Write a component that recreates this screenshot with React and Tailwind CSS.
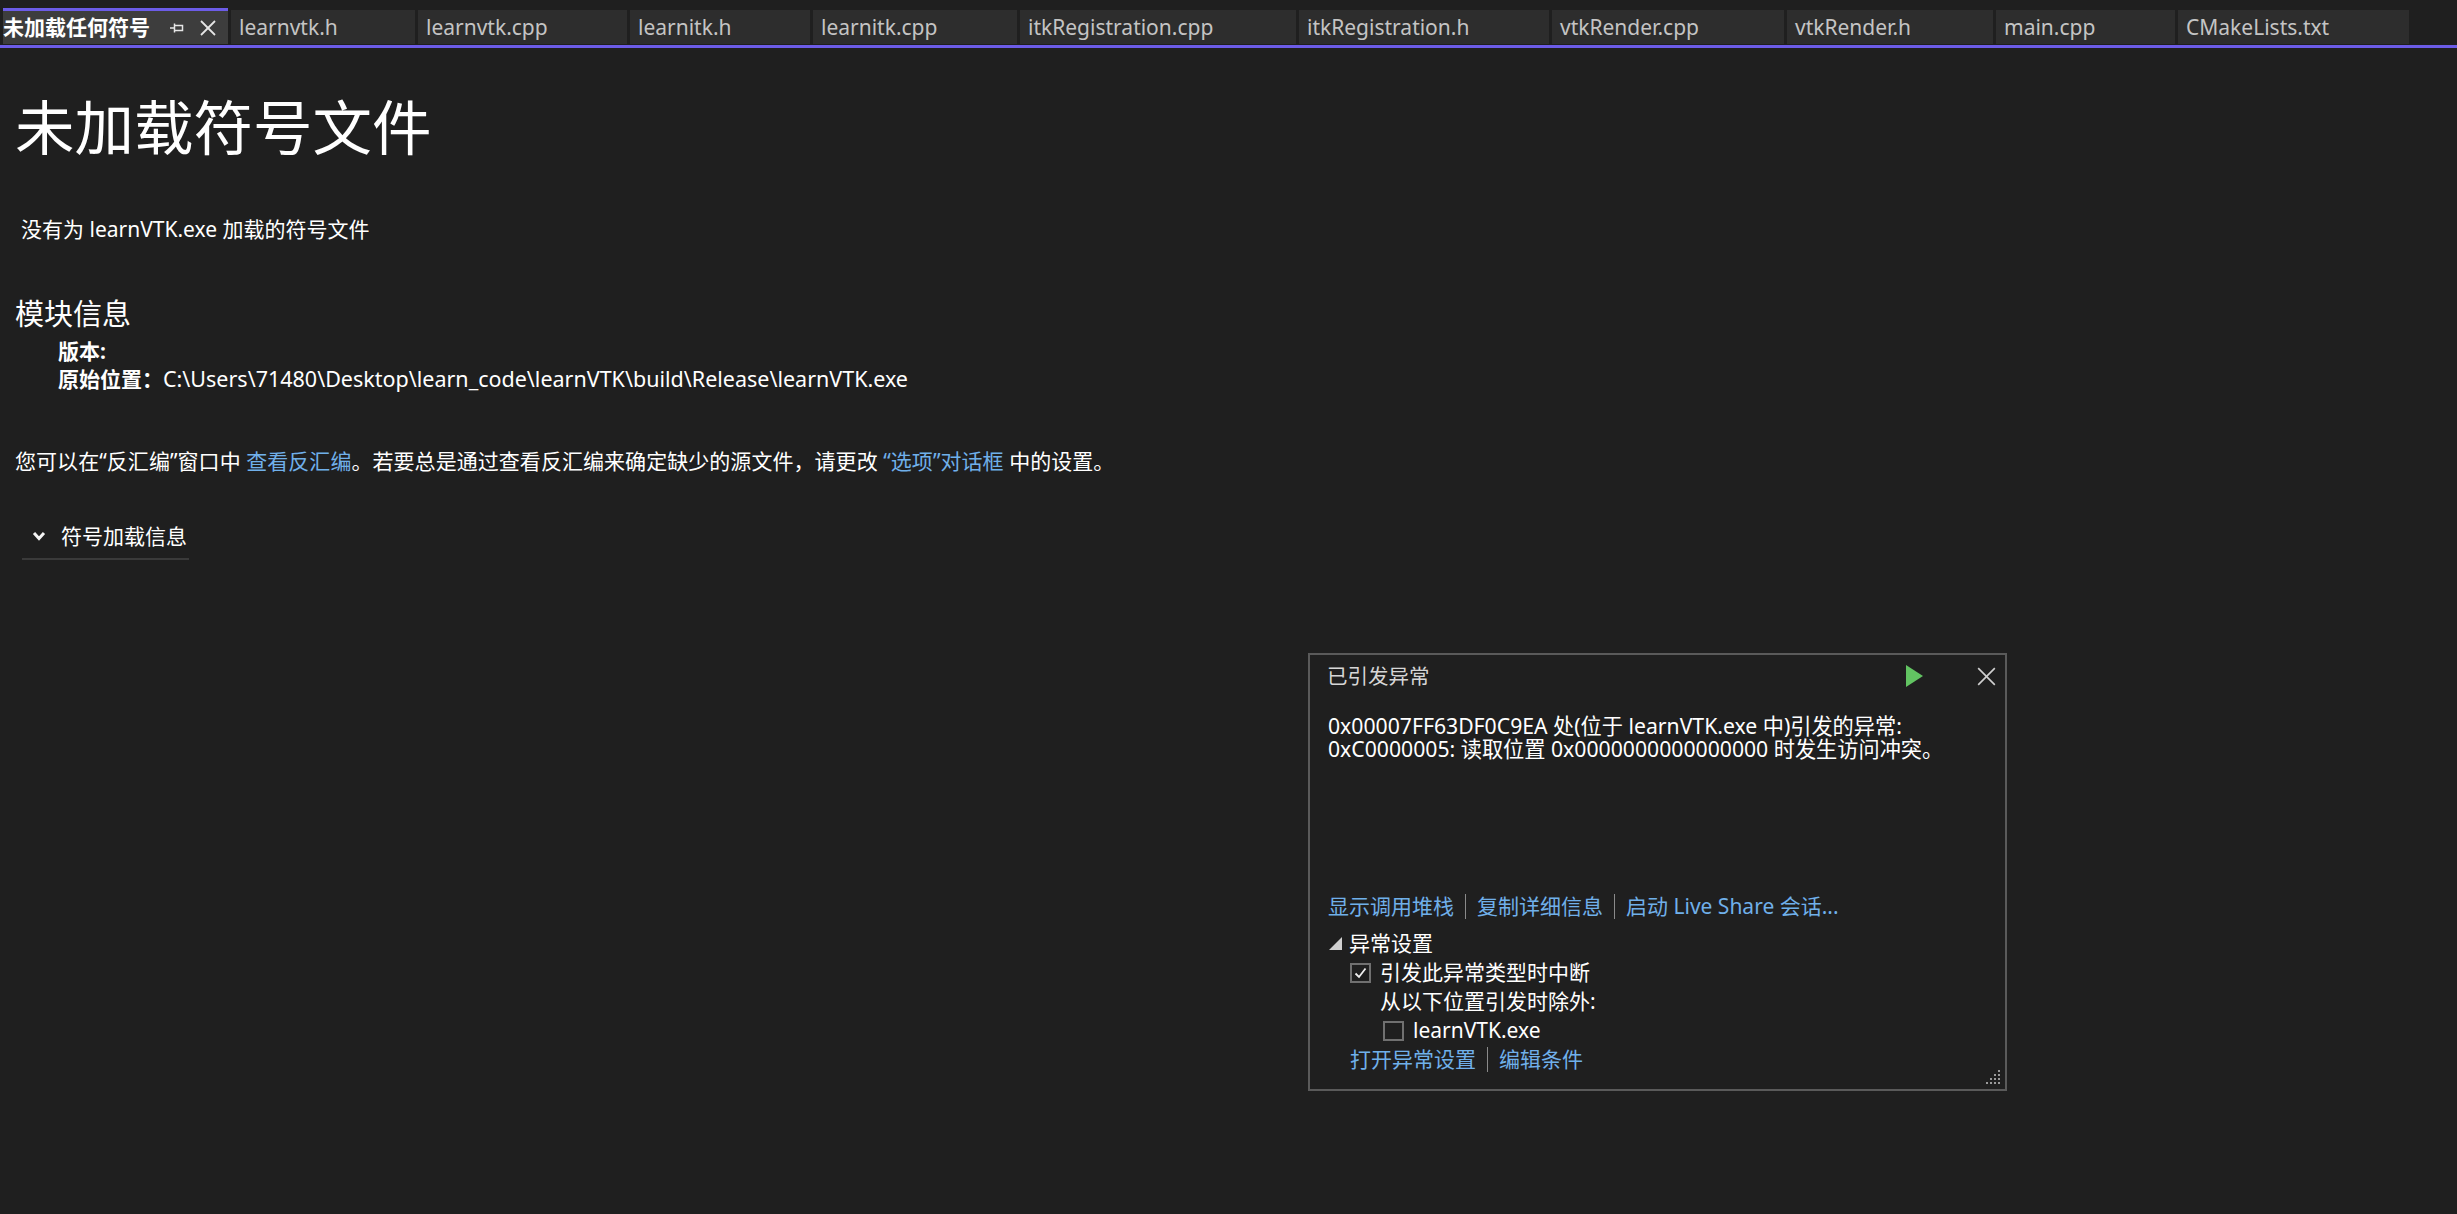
import React from 'react';

const tabs = [
  { name: 'learnvtk.h', w: 'w-[184px]' },
  { name: 'learnvtk.cpp', w: 'w-[209px]' },
  { name: 'learnitk.h', w: 'w-[180px]' },
  { name: 'learnitk.cpp', w: 'w-[204px]' },
  { name: 'itkRegistration.cpp', w: 'w-[276px]' },
  { name: 'itkRegistration.h', w: 'w-[250px]' },
  { name: 'vtkRender.cpp', w: 'w-[232px]' },
  { name: 'vtkRender.h', w: 'w-[206px]' },
  { name: 'main.cpp', w: 'w-[179px]' },
  { name: 'CMakeLists.txt', w: 'w-[231px]' },
];

function PinIcon() {
  return (
    <svg width="14" height="12" viewBox="0 0 14 12" fill="none" stroke="#e6e6e6" strokeWidth="1.5">
      <line x1="0" y1="6" x2="4" y2="6" />
      <line x1="4.5" y1="1.5" x2="4.5" y2="10.5" />
      <path d="M4.5 3.5 H12.5 V8.5 H4.5" />
    </svg>
  );
}

function CloseIcon({ size = 16, color = '#e6e6e6', width = 1.8 }) {
  return (
    <svg width={size} height={size} viewBox="0 0 16 16" fill="none" stroke={color} strokeWidth={width}>
      <line x1="1" y1="1" x2="15" y2="15" />
      <line x1="15" y1="1" x2="1" y2="15" />
    </svg>
  );
}

function TabBar() {
  return (
    <div>
      <div className="flex items-end h-[45px] pl-[3px] pb-[1px] gap-[3px]">
        <div className="flex items-center h-[36px] w-[225px] bg-[#3d3d3d] border-t-[3px] border-[#6c5ce7] shrink-0">
          <span className="text-[21px] font-bold text-white leading-none whitespace-nowrap">未加载任何符号</span>
          <span className="ml-[20px] flex items-center"><PinIcon /></span>
          <span className="ml-[16px] flex items-center"><CloseIcon size={16} /></span>
        </div>
        {tabs.map((t) => (
          <div key={t.name} className={`flex items-center h-[34px] bg-[#2d2d2d] pl-[8px] shrink-0 ${t.w}`}>
            <span className="text-[21px] text-[#c4c4c4] leading-none whitespace-nowrap">{t.name}</span>
          </div>
        ))}
      </div>
      <div className="h-[3px] bg-[#6c5ce7]" />
    </div>
  );
}

function Sep() {
  return <span className="inline-block w-px h-[25px] bg-[#8a8a8a] mx-[11px] align-middle" />;
}

function Checkbox({ checked }) {
  return (
    <span className="flex items-center justify-center w-[21px] h-[20px] border-2 border-[#707070] bg-[#1f1f1f] shrink-0">
      {checked && (
        <svg width="13" height="12" viewBox="0 0 13 12" fill="none" stroke="#f0f0f0" strokeWidth="1.8">
          <path d="M1.5 6.5 L5 10 L11.5 1.5" />
        </svg>
      )}
    </span>
  );
}

function ExceptionPopup() {
  return (
    <div className="absolute left-[1308px] top-[653px] w-[699px] h-[438px] border-2 border-[#5a5a5a] bg-[#1f1f1f] flex flex-col">
      <div className="flex items-center h-[42px] pl-[17px]">
        <span className="text-[20.5px] text-[#d6d6d6] leading-none">已引发异常</span>
        <svg className="ml-auto" width="17" height="22" viewBox="0 0 17 22">
          <polygon points="0,0 17,11 0,22" fill="#62c462" />
        </svg>
        <span className="ml-[54px] mr-[9px] flex items-center">
          <CloseIcon size={19} color="#d0d0d0" width={1.4} />
        </span>
      </div>
      <div className="mt-[17px] pl-[18px] text-[21.2px] leading-[23px] text-white">
        <div>0x00007FF63DF0C9EA 处(位于 learnVTK.exe 中)引发的异常:</div>
        <div>0xC0000005: 读取位置 0x0000000000000000 时发生访问冲突。</div>
      </div>
      <div className="mt-[132px] pl-[18px] h-[28px] flex items-center text-[21px] text-[#70b0ea] leading-none">
        <span>显示调用堆栈</span>
        <Sep />
        <span>复制详细信息</span>
        <Sep />
        <span>启动 Live Share 会话...</span>
      </div>
      <div className="mt-[9px] pl-[19px] text-[21px] text-white leading-none">
        <div className="h-[29px] flex items-center">
          <svg width="13" height="13" viewBox="0 0 13 13">
            <polygon points="13,0 13,13 0,13" fill="#d0d0d0" />
          </svg>
          <span className="ml-[7px]">异常设置</span>
        </div>
        <div className="h-[29px] flex items-center pl-[21px]">
          <Checkbox checked />
          <span className="ml-[9px]">引发此异常类型时中断</span>
        </div>
        <div className="h-[29px] flex items-center pl-[51px]">从以下位置引发时除外:</div>
        <div className="h-[29px] flex items-center pl-[54px]">
          <Checkbox />
          <span className="ml-[9px]">learnVTK.exe</span>
        </div>
        <div className="h-[29px] flex items-center pl-[21px] text-[#70b0ea]">
          <span>打开异常设置</span>
          <Sep />
          <span>编辑条件</span>
        </div>
      </div>
      <svg className="absolute right-[4px] bottom-[4px]" width="16" height="16" viewBox="0 0 16 16" fill="#9a9a9a">
        <rect x="13" y="1" width="2" height="2" />
        <rect x="9" y="5" width="2" height="2" />
        <rect x="13" y="5" width="2" height="2" />
        <rect x="5" y="9" width="2" height="2" />
        <rect x="9" y="9" width="2" height="2" />
        <rect x="13" y="9" width="2" height="2" />
        <rect x="1" y="13" width="2" height="2" />
        <rect x="5" y="13" width="2" height="2" />
        <rect x="9" y="13" width="2" height="2" />
        <rect x="13" y="13" width="2" height="2" />
      </svg>
    </div>
  );
}

export default function App() {
  return (
    <div className="relative w-[2457px] h-[1214px] overflow-hidden bg-[#1f1f1f] text-white font-['Noto_Sans','Noto_Sans_CJK_SC',sans-serif]">
      <TabBar />

      <div className="pl-[15px] pt-[49px]">
        <h1 className="text-[59.5px] leading-[59px] font-normal">未加载符号文件</h1>

        <p className="mt-[59px] ml-[6px] text-[21px] leading-[28px]">没有为 learnVTK.exe 加载的符号文件</p>

        <h2 className="mt-[54px] text-[29px] leading-[34px]">模块信息</h2>
        <div className="mt-[6px] ml-[43px] text-[21px] leading-[28px]">
          <div className="font-bold">版本:</div>
          <div><span className="font-bold">原始位置：</span><span className="text-[21.5px]">C:\Users\71480\Desktop\learn_code\learnVTK\build\Release\learnVTK.exe</span></div>
        </div>

        <p className="mt-[54px] text-[21px] leading-[28px] tracking-[0.05px]">
          您可以在“反汇编”窗口中 <span className="text-[#70b0ea]">查看反汇编</span>。若要总是通过查看反汇编来确定缺少的源文件，请更改 <span className="text-[#70b0ea]">“选项”对话框</span> 中的设置。
        </p>

        <div className="mt-[47px] ml-[7px] w-[167px] border-b-2 border-[#3a3a3a] pb-[8px] flex items-center">
          <svg className="ml-[10px]" width="14" height="10" viewBox="0 0 14 10" fill="none" stroke="#f4f4f4" strokeWidth="3">
            <path d="M2 2 L7 7.5 L12 2" />
          </svg>
          <span className="ml-[15px] text-[21px] leading-[28px]">符号加载信息</span>
        </div>
      </div>

      <ExceptionPopup />
    </div>
  );
}
